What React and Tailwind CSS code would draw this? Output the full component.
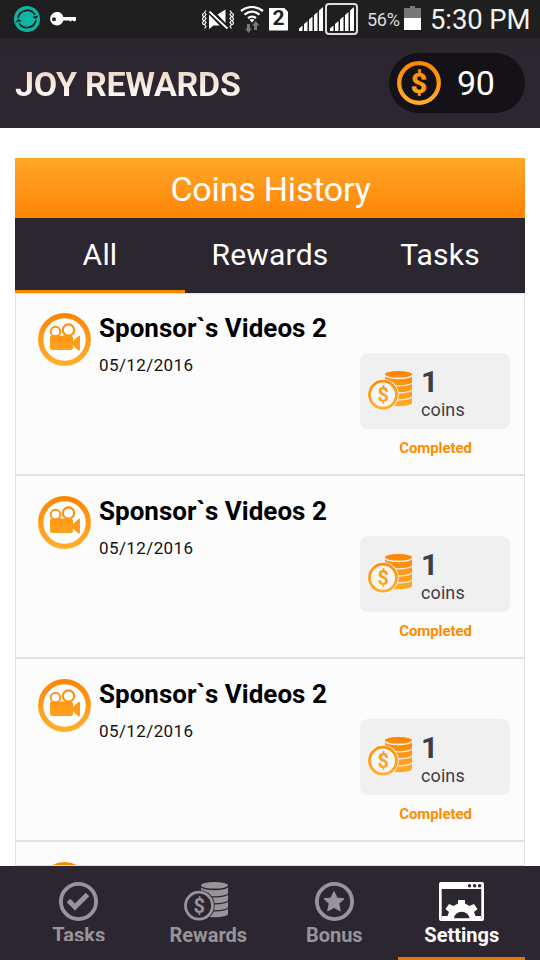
const history = [
  { id: 1, title: "Sponsor`s Videos 2", date: "05/12/2016", coins: 1 },
  { id: 2, title: "Sponsor`s Videos 2", date: "05/12/2016", coins: 1 },
  { id: 3, title: "Sponsor`s Videos 2", date: "05/12/2016", coins: 1 },
  { id: 4, title: "Sponsor`s Videos 2", date: "05/12/2016", coins: 1 },
];

const OrangeGradient = ({ id, height }) => (
  <linearGradient id={id} gradientUnits="userSpaceOnUse" x1="0" y1="0" x2="0" y2={height}>
    <stop offset="0" stopColor="#ff8400" />
    <stop offset="1" stopColor="#ffb02e" />
  </linearGradient>
);

const SignalBars = () => (
  <svg className="h-[24px] w-[24px]" viewBox="0 0 24 24" fill="#fff">
    <path d="M0 24v-2.500l3.500-3V24zM5 24v-7l3.500-3v10zM10 24V12.500l3.500-3V24zM15 24V8l3.500-3v19zM20 24V3.500L24 0v24z" />
  </svg>
);

const StatusBar = () => (
  <div className="flex h-[38px] shrink-0 items-center bg-[#1f1f1f] pl-[14px]">
    <svg className="h-[26px] w-[26px]" viewBox="0 0 26 26">
      <circle cx="13" cy="13" r="13" fill="#0db5a6" />
      <path d="M4 12a9.2 9.2 0 0 1 17-3M22 14a9.2 9.2 0 0 1-17 3" fill="none" stroke="#1f1f1f" strokeWidth="1.700" />
      <path d="M18 11l4 2 2.500-3.500zM8 15l-4-2-2.500 3.500z" fill="#1f1f1f" />
    </svg>
    <svg className="ml-[10px] h-[14px] w-[26px]" viewBox="0 0 26 14" fill="#fff">
      <path fillRule="evenodd" d="M7 0a6.700 6.700 0 0 1 6.300 5H26v3.500l-1.500 1-1.500-1h-1l-1.500 1-1.500-1h-5.700A6.700 6.700 0 1 1 7 0zM4 5.200a2 2 0 1 0 0 4 2 2 0 0 0 0-4z" />
    </svg>
    <svg className="ml-[126px] h-[21px] w-[32px]" viewBox="0 0 32 21" fill="none" stroke="#fff">
      <path
        d="M4 1.500l-1.500 2 1.500 2-1.500 2 1.500 2-1.500 2 1.500 2-1.500 2 1.500 2-1.500 2M1.500 4l-1 2 1 2-1 2 1 2-1 2 1 2M28 1.500l1.500 2-1.500 2 1.500 2-1.500 2 1.500 2-1.500 2 1.500 2-1.500 2 1.500 2M30.500 4l1 2-1 2 1 2-1 2 1 2-1 2"
        strokeWidth="1.200"
      />
      <path d="M7 5.500V20l4.500-3.500h6z" fill="#fff" stroke="none" />
      <path d="M15.500 5.500l8-5V14z" fill="#fff" stroke="none" />
      <path d="M7.500 2.500L25.500 19.500" strokeWidth="2" />
      <path d="M9 1.500L27 18.500" stroke="#1f1f1f" strokeWidth="1.500" />
    </svg>
    <svg className="ml-[6px] h-[27px] w-[24px]" viewBox="0 0 24 27" fill="none" stroke="#fff" strokeWidth="2.200">
      <path d="M1 5q11-8 22 0M4.500 8.700q7.500-6 15 0M8 12.200q4-3.200 8 0" />
      <path d="M9.500 13.700q2.500-1.600 5 0L12 16.500z" fill="#fff" stroke="none" />
      <path d="M7 18h3v4.500h2L8.500 27 5 22.500h2zM14 24v-4.500h-2l3.700-4.500 3.800 4.500H17V24z" fill="#777" stroke="none" />
    </svg>
    <div className="ml-[5px] flex h-[23px] w-[19px] items-center justify-center bg-white text-[21px] font-bold text-[#1f1f1f] [clip-path:polygon(0_0,78%_0,100%_18%,100%_100%,0_100%)]">
      2
    </div>
    <div className="ml-[11px]">
      <SignalBars />
    </div>
    <div className="ml-[2px] flex h-[32px] w-[33px] items-center justify-center rounded-[4px] border-2 border-[#ddd]">
      <SignalBars />
    </div>
    <span className="ml-[9px] w-[33px] whitespace-nowrap text-[18px] tracking-[-0.300px] text-[#ddd]">56%</span>
    <div className="mb-[2px] ml-[4px] flex w-[17px] flex-col items-center">
      <div className="h-[2px] w-[5px] bg-[#777]"></div>
      <div className="h-[10px] w-[17px] bg-[#777]"></div>
      <div className="h-[12px] w-[17px] bg-white"></div>
    </div>
    <span className="ml-[9px] mt-px whitespace-nowrap text-[27.500px] tracking-[-0.100px] text-[#f2f2f2]">5:30 PM</span>
  </div>
);

const DollarIcon = () => (
  <svg className="h-11 w-11" viewBox="0 0 44 44">
    <defs>
      <OrangeGradient id="balance" height="44" />
    </defs>
    <circle cx="22" cy="22" r="19.800" fill="none" stroke="url(#balance)" strokeWidth="4.200" />
    <text x="22" y="32" textAnchor="middle" fill="url(#balance)" stroke="url(#balance)" strokeWidth="0.500" className="text-[28.500px] font-bold">
      $
    </text>
  </svg>
);

const CoinsIcon = ({ id, color, back }) => (
  <svg className="h-[39px] w-[44px]" viewBox="0 0 44 39">
    <defs>
      <OrangeGradient id={id} height="39" />
    </defs>
    <g fill={color}>
      <ellipse cx="30.500" cy="3.300" rx="13.500" ry="3.300" />
      <path d="M17 4.700A13.500 3.600 0 0 0 44 4.700v6A13.500 3.600 0 0 1 17 10.700z" />
      <path d="M17 12A13.500 3.600 0 0 0 44 12v5.700A13.500 3.600 0 0 1 17 17.700z" />
      <path d="M17 19A13.500 3.600 0 0 0 44 19v5.700A13.500 3.600 0 0 1 17 24.700z" />
      <path d="M17 26A13.500 3.600 0 0 0 44 26v5.700A13.500 3.600 0 0 1 17 31.700z" />
    </g>
    <circle cx="15" cy="23.700" r="15.700" fill={back} />
    <circle cx="15" cy="23.700" r="13.500" fill="none" stroke={color} strokeWidth="2.800" />
    <text x="15.200" y="30.700" textAnchor="middle" fill={color} className="text-[20px] font-bold">
      $
    </text>
  </svg>
);

const CameraIcon = ({ id }) => (
  <svg className="h-[53px] w-[53px] shrink-0" viewBox="0 0 53 53">
    <defs>
      <OrangeGradient id={id} height="53" />
    </defs>
    <g stroke={`url(#${id})`} fill="none">
      <circle cx="26.500" cy="26.500" r="23.800" fill="#fff" strokeWidth="5.200" />
      <circle cx="17.500" cy="18.500" r="4.800" strokeWidth="1.900" />
      <circle cx="30.500" cy="17" r="5.700" strokeWidth="2.200" />
    </g>
    <path
      d="M14 22.500h18.500a2.500 2.500 0 0 1 2.500 2.500v3l5.500-5h1.500v14.500h-1.500L35 32.500v2a2.500 2.500 0 0 1-2.500 2.500H14.500a2.500 2.500 0 0 1-2.500-2.500v-10A2 2 0 0 1 14 22.500z"
      fill={`url(#${id})`}
    />
  </svg>
);

const HistoryRow = ({ item }) => {
  return (
    <div className="flex h-[183px] shrink-0 border-b-2 border-[#e2e2e2] pl-[22px] pr-[14px] pt-[20px] first:h-[182px] first:pt-[19px]">
      <CameraIcon id={`camera-${item.id}`} />
      <div className="ml-2 flex-1">
        <h3 className="-mt-px whitespace-nowrap text-[26px] font-bold leading-[32px] text-black">{item.title}</h3>
        <p className="mt-[10px] text-[17px] leading-[22px] tracking-[0.400px] text-[#111]">{item.date}</p>
      </div>
      <div className="mt-[40px] flex w-[150px] shrink-0 flex-col items-center">
        <div className="flex h-[76px] w-full items-center rounded-lg bg-[#f0f0f0] pl-2">
          <div className="mb-px">
            <CoinsIcon id={`coins-${item.id}`} color={`url(#coins-${item.id})`} back="#f6f6f6" />
          </div>
          <div className="ml-[9px] mt-[7px] text-[#3f3d45]">
            <p className="text-[30px] font-bold leading-[30px]">{item.coins}</p>
            <p className="text-[18px] leading-[25px] tracking-[0.100px]">coins</p>
          </div>
        </div>
        <p className="mt-[9px] pl-px text-[15px] font-bold leading-[20px] tracking-[-0.100px] text-[#ff8c00]">Completed</p>
      </div>
    </div>
  );
};

const NavItem = ({ label, active, clip, labelClass = "", children }) => (
  <div
    className={`flex flex-1 flex-col items-center border-b-[3px] pt-4 ${
      active ? "border-[#db780f] text-white" : "border-transparent text-[#97949a]"
    }`}
  >
    <div className="flex h-[39px] items-center">{children}</div>
    <div className={`mt-[2px] ${clip ? "h-[18px] overflow-hidden" : "h-[24px]"} ${labelClass}`}>
      <span className="block text-[20px] font-bold leading-[24px]">{label}</span>
    </div>
  </div>
);

export default function App() {
  return (
    <div className="flex h-[960px] w-[540px] flex-col overflow-hidden bg-white font-['Roboto',sans-serif]">
      <StatusBar />

      <header className="flex h-[90px] shrink-0 items-center justify-between bg-linear-to-b from-[#2a272a] to-[#2c2630] to-20% px-[15px] pr-[15px]">
        <h1 className="mt-[3px] bg-linear-to-b from-[#efd5c4] from-20% to-white to-80% bg-clip-text text-[34px] font-bold tracking-[-0.300px] text-transparent">
          JOY REWARDS
        </h1>
        <div className="flex h-[60px] w-[136px] items-center rounded-full bg-[#141216] pl-2">
          <DollarIcon />
          <span className="ml-4 text-[34px] tracking-[-0.300px] text-white">90</span>
        </div>
      </header>

      <main className="mx-[15px] mt-[30px] flex h-[708px] shrink-0 flex-col overflow-hidden">
        <h2 className="flex h-[60px] shrink-0 items-center justify-center bg-linear-to-b from-[#ffa726] to-[#ff8400] pl-px pt-[2px] text-[34px] tracking-[-0.200px] text-white">
          Coins History
        </h2>
        <div className="grid h-[75px] shrink-0 grid-cols-3 bg-[#2c2630] text-center text-[30px] leading-[74px] tracking-[0.200px] text-white">
          <div className="h-[75px] border-b-[3px] border-[#ff8c00]">All</div>
          <div>Rewards</div>
          <div>Tasks</div>
        </div>
        <div className="flex min-h-0 flex-1 flex-col overflow-hidden border border-[#e2e2e2] bg-[#fcfcfc]">
          {history.map((item) => (
            <HistoryRow key={item.id} item={item} />
          ))}
        </div>
      </main>

      <nav className="flex h-[94px] shrink-0 bg-[#2c2630] px-[15px]">
        <NavItem label="Tasks" clip>
          <svg className="h-[39px] w-[39px]" viewBox="0 0 39 39" fill="none" stroke="currentColor">
            <circle cx="19.500" cy="19.500" r="17.600" strokeWidth="3.800" />
            <path d="M9.500 18.500l6.500 6.500L28.500 12.500" strokeWidth="5" />
          </svg>
        </NavItem>
        <NavItem label="Rewards" labelClass="ml-[4px]">
          <CoinsIcon id="nav-coins" color="#97949a" back="#2c2630" />
        </NavItem>
        <NavItem label="Bonus" labelClass="ml-px">
          <svg className="ml-px h-[39px] w-[39px]" viewBox="0 0 39 39" fill="none" stroke="currentColor">
            <circle cx="19.500" cy="19.500" r="17.600" strokeWidth="3.800" />
            <path
              d="M19 9.500l3 6.500 7 .8-5.200 4.800 1.500 7.400-6.300-3.600-6.300 3.600 1.500-7.400-5.200-4.800 7-.8z"
              fill="currentColor"
              strokeLinejoin="round"
            />
          </svg>
        </NavItem>
        <NavItem label="Settings" active labelClass="ml-px">
          <svg className="h-[39px] w-[45px]" viewBox="0 0 45 39" fill="currentColor">
            <path fillRule="evenodd" d="M2 0h41a2 2 0 0 1 2 2v35a2 2 0 0 1-2 2H2a2 2 0 0 1-2-2V2a2 2 0 0 1 2-2zM2.700 7v29.300h39.600V7z" />
            <path d="M3 34h5.500l1.500-4-3.500-3 3.500-5 4.500 2 4.500-2.500V18h7v3.500l4.500 2.500 4.500-2 3.500 5-3.500 3 1.500 4H42v4.500H3z" />
            <path d="M15 36.300a7.700 6.500 0 0 1 15.400 0z" fill="#2c2630" />
            <g fill="#2c2630">
              <circle cx="30.500" cy="3.700" r="1.700" />
              <circle cx="35.600" cy="3.700" r="1.700" />
              <circle cx="40.600" cy="3.700" r="1.700" />
            </g>
          </svg>
        </NavItem>
      </nav>
    </div>
  );
}
